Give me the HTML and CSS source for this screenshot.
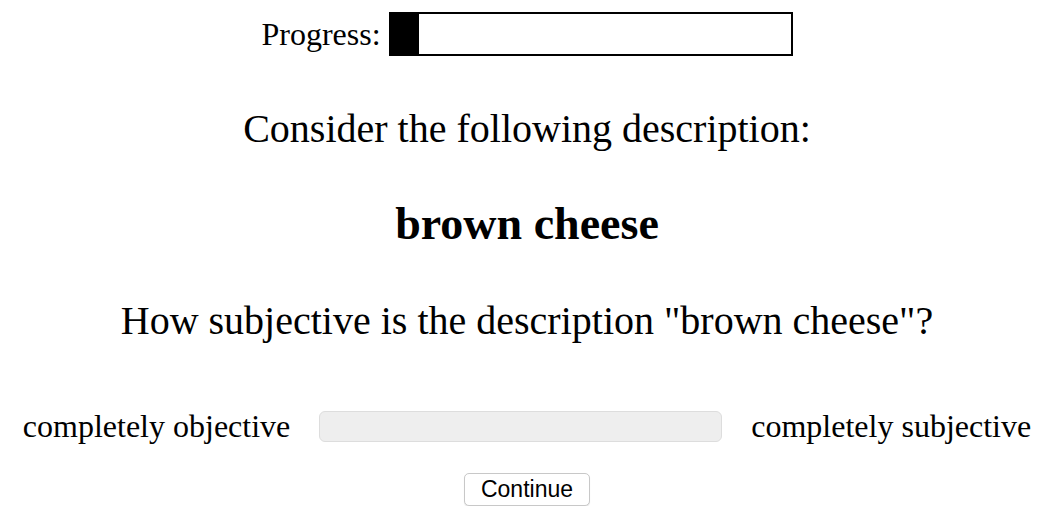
FILE: index.html
```html
<!DOCTYPE html>
<html>
<head>
<meta charset="utf-8">
<link rel="stylesheet" href="styles.css">
</head>
<body>
<div class="page">
  <div class="progress-row">
    <span class="progress-label">Progress:</span>
    <div class="progress-bar"><div class="progress-fill"></div></div>
  </div>
  <div class="prompt">Consider the following description:</div>
  <div class="item">brown cheese</div>
  <div class="question">How subjective is the description "brown cheese"?</div>
  <div class="scale-row">
    <span class="scale-label">completely objective</span>
    <div class="slider"></div>
    <span class="scale-label">completely subjective</span>
  </div>
  <button class="continue">Continue</button>
</div>
</body>
</html>
```
FILE: styles.css
```css
html, body {
  margin: 0;
  padding: 0;
  background: #fff;
}
body {
  font-family: "Liberation Serif", "Times New Roman", serif;
  color: #000;
}
.page {
  display: flex;
  flex-direction: column;
  align-items: center;
  padding-top: 12px;
}
.progress-row {
  display: flex;
  align-items: center;
  gap: 8px;
  height: 44px;
}
.progress-label {
  font-size: 32px;
  line-height: 36px;
}
.progress-bar {
  width: 400px;
  height: 40px;
  border: 2px solid #000;
  background: #fff;
}
.progress-fill {
  width: 28px;
  height: 100%;
  background: #000;
}
.prompt {
  margin-top: 50px;
  font-size: 40px;
  line-height: 46px;
}
.item {
  margin-top: 46px;
  font-size: 46px;
  line-height: 52px;
  font-weight: bold;
}
.question {
  margin-top: 48px;
  font-size: 40px;
  line-height: 46px;
}
.scale-row {
  margin-top: 64px;
  display: flex;
  align-items: center;
  gap: 29px;
  height: 36px;
}
.scale-label {
  font-size: 32px;
  line-height: 36px;
}
.slider {
  width: 401px;
  height: 29px;
  background: #eee;
  border: 1px solid #ddd;
  border-radius: 6px;
}
.continue {
  margin-top: 29px;
  font-family: "Liberation Sans", Arial, sans-serif;
  font-size: 23px;
  line-height: 25px;
  padding: 3px 16px;
  background: #fff;
  border: 1px solid #c8c8c8;
  border-radius: 5px;
  color: #000;
  box-shadow: 0 1px 1px rgba(0,0,0,0.1);
}
```
